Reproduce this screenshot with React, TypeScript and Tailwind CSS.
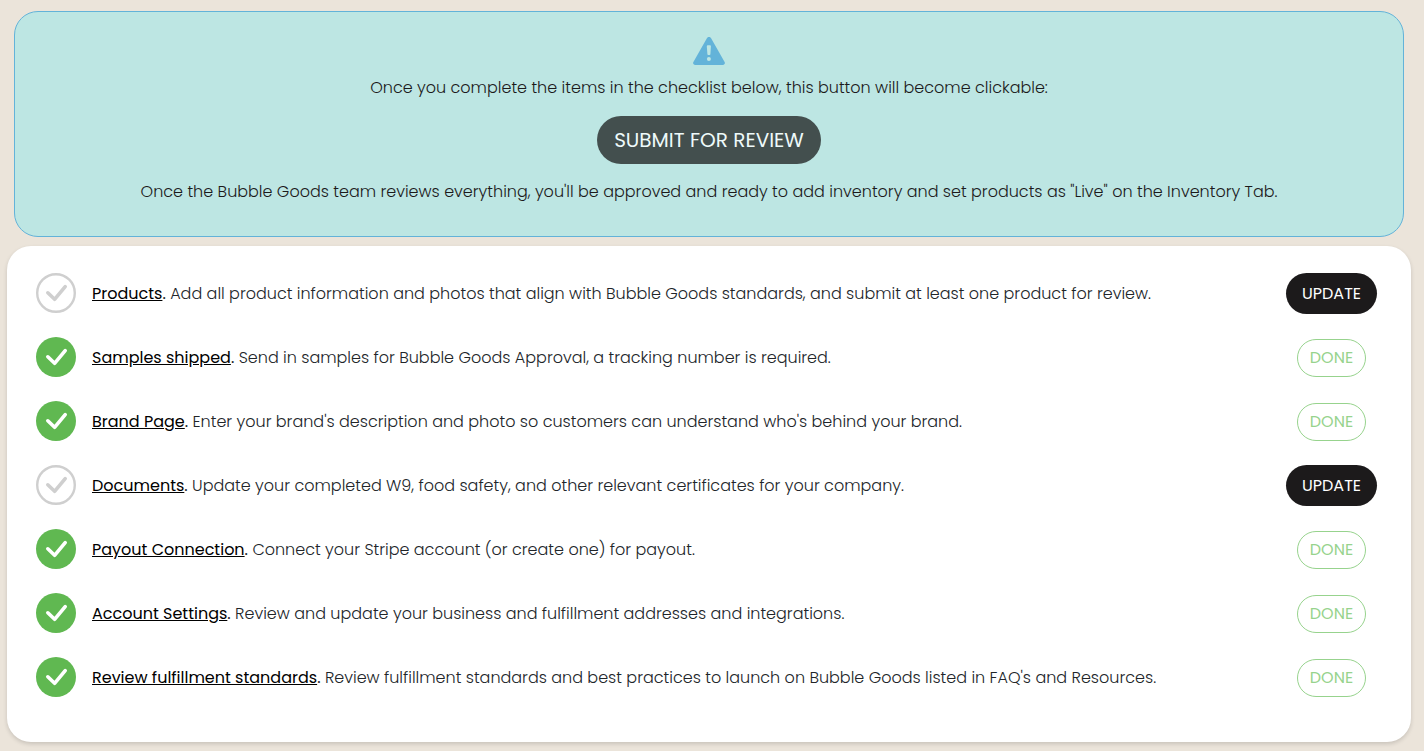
import React from 'react';
import clsx from 'clsx';

interface ChecklistItem {
  id: string;
  title: string;
  description: string;
  done: boolean;
}

const CHECKLIST_ITEMS: ChecklistItem[] = [
  {
    id: 'products',
    title: 'Products',
    description:
      'Add all product information and photos that align with Bubble Goods standards, and submit at least one product for review.',
    done: false,
  },
  {
    id: 'samples',
    title: 'Samples shipped',
    description: 'Send in samples for Bubble Goods Approval, a tracking number is required.',
    done: true,
  },
  {
    id: 'brand-page',
    title: 'Brand Page',
    description:
      "Enter your brand's description and photo so customers can understand who's behind your brand.",
    done: true,
  },
  {
    id: 'documents',
    title: 'Documents',
    description:
      'Update your completed W9, food safety, and other relevant certificates for your company.',
    done: false,
  },
  {
    id: 'payout',
    title: 'Payout Connection',
    description: 'Connect your Stripe account (or create one) for payout.',
    done: true,
  },
  {
    id: 'settings',
    title: 'Account Settings',
    description: 'Review and update your business and fulfillment addresses and integrations.',
    done: true,
  },
  {
    id: 'fulfillment',
    title: 'Review fulfillment standards',
    description:
      "Review fulfillment standards and best practices to launch on Bubble Goods listed in FAQ's and Resources.",
    done: true,
  },
];

const WarningIcon: React.FC = () => (
  <svg className="h-7 w-8" viewBox="0 0 32 28" aria-hidden="true">
    <path
      d="M13.9 1.3C14.8-.4 17.2-.4 18.1 1.3L31.6 25C32.4 26.5 31.5 28 29.8 28H2.2C.5 28-.4 26.5.4 25Z"
      fill="#63b3d9"
    />
    <path d="M13.8 9.2Q13.8 8.2 14.8 8.2H17Q18 8.2 17.9 9.2L17.4 17.2Q17.3 18 16.6 18H15.2Q14.5 18 14.4 17.2Z" fill="#bde6e3" />
    <circle cx="15.9" cy="22" r="2" fill="#bde6e3" />
  </svg>
);

const StatusIcon: React.FC<{ done: boolean }> = ({ done }) => (
  <svg
    className="size-10 shrink-0"
    viewBox="0 0 40 40"
    fill="none"
    role="img"
    aria-label={done ? 'Complete' : 'Incomplete'}
  >
    {done ? (
      <circle cx="20" cy="20" r="20" fill="#60b851" />
    ) : (
      <circle cx="20" cy="20" r="18.8" stroke="#cfcfcf" strokeWidth="2.4" />
    )}
    <path
      d="M11.8 19.8L18.6 26.3L29.2 13.7"
      stroke={done ? '#ffffff' : '#cfcfcf'}
      strokeWidth="3.6"
      strokeLinecap="round"
      strokeLinejoin="round"
    />
  </svg>
);

const ChecklistRow: React.FC<{ item: ChecklistItem }> = ({ item }) => (
  <li className="flex h-16 items-center gap-4">
    <StatusIcon done={item.done} />
    <p className="flex-1 pt-0.5">
      <a href={`#${item.id}`} className="font-normal text-black underline">
        {item.title}
      </a>
      <span className="font-normal">.</span> {item.description}
    </p>
    <div className="flex w-[91px] shrink-0 justify-center pt-px">
      <button
        type="button"
        disabled={item.done}
        className={clsx(
          'rounded-full font-normal',
          item.done
            ? 'h-[38px] w-[69px] border border-[#97d38d] text-[#97d38d]'
            : 'h-[41px] w-full bg-[#1c1a1b] text-white'
        )}
      >
        {item.done ? 'DONE' : 'UPDATE'}
      </button>
    </div>
  </li>
);

export default function App() {
  return (
    <main className="min-h-screen bg-[#ebe4da] pt-[11px] pr-[13px] pb-[9px] pl-[7px] font-[Poppins,Inter,sans-serif] text-base font-light text-[#212529]">
      {/* Submission notice */}
      <section className="mx-[7px] flex flex-col items-center rounded-3xl border border-[#63b3d9] bg-[#bde6e3] px-4 pt-[25px] pb-8 text-center text-[#1c1a1b]">
        <WarningIcon />
        <p className="mt-[11px]">
          Once you complete the items in the checklist below, this button will become clickable:
        </p>
        <button
          type="button"
          disabled
          className="mt-4 h-12 w-56 rounded-full bg-[#434f4e] text-xl font-normal text-[#eefafa]"
        >
          SUBMIT FOR REVIEW
        </button>
        <p className="mt-4">
          Once the Bubble Goods team reviews everything, you'll be approved and ready to add
          inventory and set products as "Live" on the Inventory Tab.
        </p>
      </section>

      {/* Checklist */}
      <section className="mt-[9px] rounded-3xl bg-white pt-[15px] pr-[34px] pb-[33px] pl-[29px] shadow-[0_2px_4px_rgba(0,0,0,0.15)]">
        <ul>
          {CHECKLIST_ITEMS.map((item) => (
            <ChecklistRow key={item.id} item={item} />
          ))}
        </ul>
      </section>
    </main>
  );
}
